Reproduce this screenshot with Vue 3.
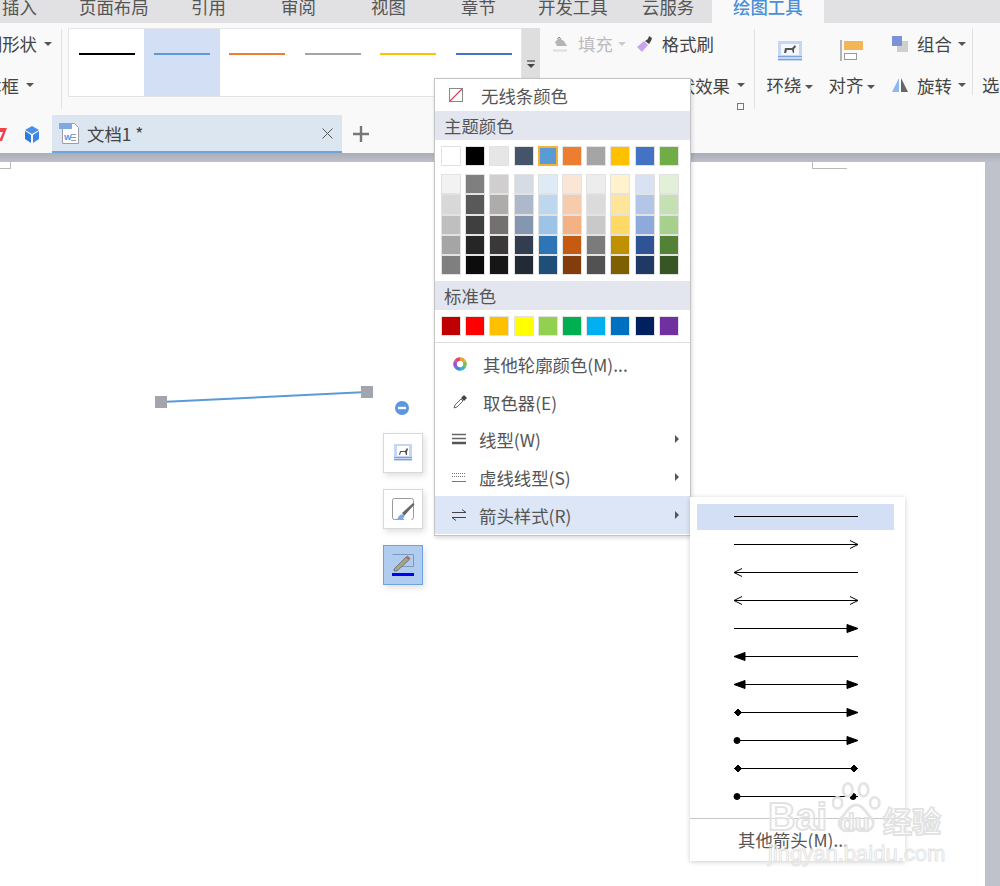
<template>
  <div class="app">
    <!-- 顶部选项卡 -->
    <div class="menu-bar">
      <span v-for="t in menuTabs" :key="t.name" class="menu-tab" :style="{ width: t.w + 'px' }">{{ t.name }}</span>
      <span class="menu-tab active">绘图工具</span>
    </div>

    <!-- 功能区 -->
    <div class="ribbon">
      <div class="rb-group shapes">
        <div class="rb-row first">绘制形状<i class="caret"></i></div>
        <div class="rb-row second">文本框<i class="caret"></i></div>
      </div>
      <div class="rb-sep"></div>
      <div class="gallery">
        <div v-for="(c, i) in lineColors" :key="c" class="gallery-item" :class="{ on: i === 1 }">
          <span class="gallery-line" :style="{ background: c }"></span>
        </div>
      </div>
      <div class="gallery-scroll">
        <svg width="10" height="10" viewBox="0 0 10 10"><path d="M1 1h8" stroke="#444" stroke-width="1.2" /><path d="M1 4h8L5 8z" fill="#444" /></svg>
      </div>
      <div class="rb-group fills">
        <div class="rb-row">
          <svg class="fill-icon" width="16" height="16" viewBox="0 0 16 16"><path d="M3 6l4-4 5 3 3 5H5z" fill="#b5b5b5" /><path d="M5 3l2-2 2 2" fill="none" stroke="#999" /><path d="M1 14.500h14" stroke="#ddd" stroke-width="2" /></svg>
          <span class="muted">填充</span><i class="caret light"></i>
          <svg class="brush-icon" width="16" height="16" viewBox="0 0 16 16"><path d="M0 11l7-6 4 4-6 7z" fill="#c7a4ee" /><path d="M8 5l3-2 1-3 3 2-1 3-2 3z" fill="#444" /></svg>
          <span>格式刷</span>
        </div>
        <div class="rb-row effect">状效果<i class="caret"></i></div>
        <i class="launcher"></i>
      </div>
      <div class="rb-sep second"></div>
      <div class="rb-big lead">
        <svg width="24" height="20" viewBox="0 0 24 20"><rect width="24" height="20" fill="#c5d7f2" /><path d="M0 15.500h24M0 18.500h24" stroke="#7ba3e0" /><rect x="3" y="3" width="18" height="11" fill="#f4f7fc" /><path d="M6 12l1-5h7l3-3 1 2-2 2v4h-1l-1-3H9l-1 3z" fill="#555" /></svg>
        <span>环绕<i class="caret"></i></span>
      </div>
      <div class="rb-big">
        <svg width="24" height="22" viewBox="0 0 24 22"><path d="M1 0v21" stroke="#999" stroke-width="1.4" /><rect x="4" y="1" width="19" height="9" fill="#f3b654" /><rect x="4.500" y="13.500" width="12" height="6" fill="#fff" stroke="#999" /></svg>
        <span>对齐<i class="caret"></i></span>
      </div>
      <div class="rb-stack">
        <div class="rb-row">
          <svg width="16" height="16" viewBox="0 0 16 16"><rect x="5" y="5" width="11" height="11" fill="#cfcfcf" /><rect width="10" height="10" fill="#7c92d8" /></svg>
          <span>组合</span><i class="caret"></i>
        </div>
        <div class="rb-row">
          <svg width="16" height="14" viewBox="0 0 16 14"><path d="M7 0v14H0z" fill="#8fb8ee" /><path d="M9 0v14h7z" fill="#666" /></svg>
          <span>旋转</span><i class="caret"></i>
        </div>
      </div>
      <div class="rb-sep third"></div>
      <div class="rb-clip">选</div>
    </div>

    <!-- 文档标签 -->
    <div class="tab-bar">
      <svg class="tb-seven" width="9" height="14" viewBox="0 0 9 14"><path d="M0 1h9L4 14H1L5 5H0z" fill="#f0434b" /></svg>
      <svg class="tb-cube" width="16" height="17" viewBox="0 0 16 17"><path d="M8 0l7 4-7 4-7-4z" fill="#4a8fe8" /><path d="M1 5l6 4v8l-6-4z" fill="#2f7be0" /><path d="M15 5L9 9v8l6-4z" fill="#3d86e6" /></svg>
      <div class="doc-tab">
        <svg width="21" height="22" viewBox="0 0 21 22">
          <path d="M3.500 1.500h12l4 4v16h-16z" fill="#fff" stroke="#9a9fa8" />
          <path d="M12 12.500h5M12 15.500h5M12 18.500h5" stroke="#8e9bb0" />
          <text x="5" y="18" font-size="8" font-weight="700" fill="#4a8fe8" font-family="Liberation Sans, sans-serif">W</text>
          <rect y="1" width="13" height="6" fill="#7ea9e2" />
        </svg>
        <span class="doc-name">文档1 *</span>
        <svg class="doc-close" width="11" height="11" viewBox="0 0 11 11"><path d="M.5.5l10 10M10.500.5l-10 10" stroke="#555" /></svg>
      </div>
      <svg class="tb-plus" width="18" height="18" viewBox="0 0 18 18"><path d="M9 1v16M1 9h16" stroke="#777" stroke-width="2.400" /></svg>
    </div>

    <!-- 文档区域 -->
    <div class="workspace">
      <div class="page">
        <i class="corner left"></i>
        <i class="corner right"></i>
      </div>
    </div>

    <!-- 画布上选中的线条 -->
    <svg class="shape-line" width="240" height="40" viewBox="0 0 240 40">
      <path d="M11 22L217 12" stroke="#5b9bd5" stroke-width="2" />
      <rect x="5" y="16" width="12" height="12" fill="#a3a5ae" />
      <rect x="211" y="6" width="12" height="12" fill="#a3a5ae" />
    </svg>

    <svg class="collapse" width="14" height="14" viewBox="0 0 14 14"><circle cx="7" cy="7" r="7" fill="#5b97e0" /><rect x="3" y="5.800" width="8" height="2.400" fill="#fff" /></svg>

    <div class="float-btn b1">
      <svg width="18" height="18" viewBox="0 0 18 18"><rect width="18" height="17" fill="#c5d7f2" /><path d="M0 13.500h18M0 15.500h18" stroke="#7ba3e0" /><rect x="3" y="2" width="12" height="10" fill="#fff" /><path d="M5 11l1-4h5l2-3 1 1-1 3v3h-1l-1-3H7l-1 3z" fill="#555" /></svg>
    </div>
    <div class="float-btn b2">
      <svg width="24" height="24" viewBox="0 0 24 24"><path d="M13 22.500H3.500a2 2 0 0 1-2-2v-17a2 2 0 0 1 2-2h17a2 2 0 0 1 2 2v17a2 2 0 0 1-2 2" fill="none" stroke="#999" /><path d="M11 16L22 6l1.500 1.500L13 19z" fill="#666" /><path d="M6 23c1-4 3-6 6-5.500l1.500 2-2.500 3.500z" fill="#7ba7ee" /></svg>
    </div>
    <div class="float-btn b3">
      <svg width="24" height="24" viewBox="0 0 24 24"><path d="M1.500 1.500h21v12H10" fill="none" stroke="#7c9ac0" /><path d="M3 16L15 4l3 3L6 18H3z" fill="#a3a38a" stroke="#555" stroke-width=".6" /><path d="M15 4l1.500-1.500 3 3L18 7z" fill="#b06a6a" /><rect x="1" y="20" width="22" height="3" fill="#0000ff" /></svg>
    </div>

    <!-- 线条颜色菜单 -->
    <div class="color-menu">
      <div class="menu-item none-item">
        <svg width="14" height="14" viewBox="0 0 14 14"><rect x=".5" y=".5" width="13" height="13" fill="#fff" stroke="#888" /><path d="M1 13L13 1" stroke="#e0415f" stroke-width="1.200" /></svg>
        <span>无线条颜色</span>
      </div>
      <div class="menu-head">主题颜色</div>
      <div class="swatch-row top">
        <span v-for="c in themeColors" :key="c" class="swatch" :class="{ picked: c === '#5b9bd5' }" :style="{ background: c }"></span>
      </div>
      <div class="shade-grid">
        <span v-for="(c, i) in shades" :key="i" class="swatch" :style="{ background: c }"></span>
      </div>
      <div class="menu-head">标准色</div>
      <div class="swatch-row">
        <span v-for="c in standardColors" :key="c" class="swatch" :style="{ background: c }"></span>
      </div>
      <div class="menu-line"></div>
      <div class="menu-item wide">
        <svg width="14" height="14" viewBox="0 0 14 14" fill="none" stroke-width="3.500">
          <path d="M7 2a5 5 0 0 1 4.300 2.500" stroke="#e9a13b" />
          <path d="M11.300 4.500a5 5 0 0 1 0 5" stroke="#7cc04b" />
          <path d="M11.300 9.500A5 5 0 0 1 7 12" stroke="#35b6c9" />
          <path d="M7 12a5 5 0 0 1-4.300-2.500" stroke="#4a7fe0" />
          <path d="M2.700 9.500a5 5 0 0 1 0-5" stroke="#a24bd0" />
          <path d="M2.700 4.500A5 5 0 0 1 7 2" stroke="#e0457a" />
        </svg>
        <span>其他轮廓颜色(M)...</span>
      </div>
      <div class="menu-item wide">
        <svg width="14" height="14" viewBox="0 0 14 14"><path d="M1 13l1-3 6-6 2 2-6 6z" fill="#fff" stroke="#666" /><path d="M8 3l3-3 3 3-3 3z" fill="#444" /></svg>
        <span>取色器(E)</span>
      </div>
      <div class="menu-item">
        <svg width="14" height="12" viewBox="0 0 14 12"><path d="M0 1.500h14M0 5.500h14" stroke="#666" stroke-width="1.500" /><path d="M0 10h14" stroke="#555" stroke-width="2.500" /></svg>
        <span>线型(W)</span><i class="sub-caret"></i>
      </div>
      <div class="menu-item">
        <svg width="14" height="12" viewBox="0 0 14 12"><path d="M0 2.500h14M0 5.500h14" stroke="#777" stroke-dasharray="1 1" /><path d="M0 10.500h14" stroke="#777" /></svg>
        <span>虚线线型(S)</span><i class="sub-caret"></i>
      </div>
      <div class="menu-item hover">
        <svg width="14" height="12" viewBox="0 0 14 12" fill="none" stroke="#444"><path d="M0 3.500h14M10 .5l4 3" /><path d="M0 8.500h14M4 11.500l-4-3" /></svg>
        <span>箭头样式(R)</span><i class="sub-caret"></i>
      </div>
    </div>

    <!-- 箭头样式子菜单 -->
    <div class="arrow-menu">
      <div class="arrow-list">
        <div v-for="(a, i) in arrows" :key="i" class="arrow-row" :class="{ on: i === 0 }">
          <svg width="126" height="13" viewBox="0 0 126 13">
            <path d="M1 6.500h124" stroke="#000" stroke-width="1.200" />
            <g transform="translate(0 .5)">
              <path v-if="a[0]" :d="heads[a[0]].left" :fill="heads[a[0]].fill" stroke="#000" />
              <path v-if="a[1]" :d="heads[a[1]].right" :fill="heads[a[1]].fill" stroke="#000" />
            </g>
          </svg>
        </div>
      </div>
      <div class="arrow-more">其他箭头(M)...</div>
    </div>

    <!-- 水印 -->
    <div class="watermark">
      <svg class="paw" width="52" height="57" viewBox="0 0 56 56" fill="none" stroke="#e4e4e4" stroke-width="3">
        <ellipse cx="17" cy="8" rx="5" ry="7" />
        <ellipse cx="34" cy="8" rx="5" ry="7" />
        <ellipse cx="6" cy="22" rx="5" ry="6" />
        <ellipse cx="46" cy="22" rx="5" ry="6" />
        <path d="M26 24c-7 0-10 8-16 14-6 7 0 15 8 14 4 0 6-2 8-2s4 2 8 2c8 1 14-7 8-14-6-6-9-14-16-14z" />
      </svg>
      <span class="wm wm-bai">Bai</span>
      <span class="wm wm-du">du</span>
      <span class="wm wm-jy">经验</span>
      <span class="wm wm-url">jingyan.baidu.com</span>
    </div>
  </div>
</template>

<script setup>
const menuTabs = [
  { name: "插入", w: 77 },
  { name: "页面布局", w: 112 },
  { name: "引用", w: 90 },
  { name: "审阅", w: 90 },
  { name: "视图", w: 90 },
  { name: "章节", w: 77 },
  { name: "开发工具", w: 104 },
  { name: "云服务", w: 72 }
];

const lineColors = ["#000000", "#5b9bd5", "#ed7d31", "#a5a5a5", "#ffc000", "#4472c4"];

const themeColors = ["#ffffff", "#000000", "#e7e6e6", "#44546a", "#5b9bd5", "#ed7d31", "#a5a5a5", "#ffc000", "#4472c4", "#70ad47"];

// 按行排列的主题色深浅
const shades = [
  "#f2f2f2", "#7f7f7f", "#d0cece", "#d6dce4", "#deeaf6", "#fbe5d5", "#ededed", "#fff2cc", "#d9e2f3", "#e2efd9",
  "#d8d8d8", "#595959", "#aeabab", "#adb9ca", "#bdd7ee", "#f7cbac", "#dbdbdb", "#fee599", "#b4c6e7", "#c5e0b3",
  "#bfbfbf", "#3f3f3f", "#757070", "#8496b0", "#9dc3e6", "#f4b183", "#c9c9c9", "#ffd965", "#8eaadb", "#a8d08d",
  "#a5a5a5", "#262626", "#3a3838", "#323e4f", "#2e75b5", "#c55a11", "#7b7b7b", "#bf9000", "#2f5496", "#538135",
  "#7f7f7f", "#0c0c0c", "#171616", "#222a35", "#1f4e79", "#833c0b", "#525252", "#7f6000", "#1f3864", "#375623"
];

const standardColors = ["#c00000", "#ff0000", "#ffc000", "#ffff00", "#92d050", "#00b050", "#00b0f0", "#0070c0", "#002060", "#7030a0"];

const heads = {
  open: { left: "M9 2L1 6l8 4", right: "M117 2l8 4-8 4", fill: "none" },
  solid: { left: "M1 6l11-4v8z", right: "M125 6l-11-4v8z", fill: "#000" },
  diamond: { left: "M5 2.500l3.500 3.500-3.500 3.500L1.500 6z", right: "M121 2.500l3.500 3.500-3.500 3.500-3.500-3.500z", fill: "#000" },
  dot: { left: "M4 3a3 3 0 1 1 0 6 3 3 0 0 1 0-6z", right: "M120 3a3 3 0 1 1 0 6 3 3 0 0 1 0-6z", fill: "#000" }
};

const arrows = [
  [null, null],
  [null, "open"],
  ["open", null],
  ["open", "open"],
  [null, "solid"],
  ["solid", null],
  ["solid", "solid"],
  ["diamond", "solid"],
  ["dot", "solid"],
  ["diamond", "diamond"],
  ["dot", "dot"]
];
</script>

<style>
html,
body {
  margin: 0;
  background: #fff;
}
</style>

<style scoped>
.app {
  position: relative;
  width: 1000px;
  height: 886px;
  overflow: hidden;
  font-family: "Noto Sans CJK SC", "Liberation Sans", sans-serif;
  font-size: 17.400px;
  color: #444;
  background: #fff;
}

.menu-bar {
  display: flex;
  height: 23px;
  overflow: hidden;
  line-height: 17px;
  background: #e1e1e3;
}

.menu-tab {
  flex: none;
  padding-left: 2px;
  margin-top: -2px;
  color: #555;
  box-sizing: border-box;
}

.menu-tab.active {
  width: 112px;
  padding-left: 21px;
  margin-top: 0;
  font-weight: 500;
  line-height: 13px;
  color: #4a8fd8;
  background: #f9f9f9;
}

.ribbon {
  display: flex;
  height: 92px;
  background: #f9f9f9;
}

.rb-group.shapes {
  flex: none;
  width: 61px;
  box-sizing: border-box;
}

.rb-row {
  display: flex;
  align-items: center;
  height: 41.500px;
  white-space: nowrap;
}

.shapes .rb-row {
  justify-content: flex-end;
}

.shapes .first {
  padding-right: 9px;
}

.shapes .second {
  padding-right: 27px;
}

.caret {
  display: inline-block;
  flex: none;
  width: 0;
  height: 0;
  margin-left: 7px;
  vertical-align: middle;
  border-top: 4px solid #555;
  border-right: 4px solid transparent;
  border-left: 4px solid transparent;
}

.caret.light {
  margin-left: 5px;
  border-top-color: #ccc;
}

.rb-sep {
  flex: none;
  width: 1px;
  height: 80px;
  margin-top: 6px;
  background: #e2e2e2;
}

.gallery {
  display: flex;
  flex: none;
  width: 454px;
  height: 69px;
  margin-top: 5px;
  margin-left: 6px;
  overflow: hidden;
  background: #fff;
  border: 1px solid #e4e4e4;
  box-sizing: border-box;
}

.gallery-item {
  display: flex;
  flex: none;
  justify-content: center;
  width: 75.400px;
  height: 100%;
  padding-top: 24px;
  box-sizing: border-box;
}

.gallery-item.on {
  background: #d3dff5;
}

.gallery-line {
  width: 56px;
  height: 2px;
}

.gallery-scroll {
  display: flex;
  flex: none;
  align-items: flex-end;
  justify-content: center;
  width: 18px;
  height: 69px;
  padding-bottom: 27px;
  margin-top: 5px;
  background: #dedede;
  box-sizing: border-box;
}

.rb-group.fills {
  position: relative;
  flex: none;
  width: 214px;
  padding-left: 12px;
  box-sizing: border-box;
}

.fill-icon {
  margin-right: 10px;
}

.muted {
  color: #bbb;
}

.brush-icon {
  margin-right: 9px;
  margin-left: 11px;
}

.rb-row.effect {
  justify-content: flex-end;
  padding-right: 9px;
}

.launcher {
  position: absolute;
  top: 80px;
  right: 10px;
  width: 5px;
  height: 5px;
  border: 1px solid #777;
}

.rb-big {
  display: flex;
  flex: none;
  flex-direction: column;
  align-items: center;
  width: 62px;
  padding-top: 17px;
  box-sizing: border-box;
}

.rb-big.lead {
  margin-left: 4px;
}

.rb-big svg {
  height: 22px;
}

.rb-big span {
  margin-top: 10px;
  white-space: nowrap;
}

.rb-big .caret {
  margin-left: 4px;
}

.rb-stack {
  flex: none;
  width: 89px;
  padding-left: 9px;
  box-sizing: border-box;
}

.rb-stack svg {
  flex: none;
}

.rb-stack span {
  margin-left: 9px;
}

.rb-stack .caret {
  margin-left: 6px;
}

.rb-sep.third {
  height: 67px;
  margin-top: 5px;
}

.rb-clip {
  padding-top: 42px;
  padding-left: 9px;
  line-height: 40px;
  white-space: nowrap;
}

.tab-bar {
  position: relative;
  display: flex;
  align-items: center;
  height: 38px;
  background: #f9f9f9;
}

.tb-seven {
  margin-left: -2px;
}

.tb-cube {
  margin-left: 17px;
}

.doc-tab {
  display: flex;
  align-items: center;
  width: 290px;
  height: 38px;
  padding: 0 9px 0 7px;
  margin-left: 12px;
  background: #dce6f1;
  border-bottom: 2px solid #6fa3de;
  box-sizing: border-box;
}

.doc-name {
  flex: 1;
  padding-top: 1px;
  margin-left: 7px;
}

.tb-plus {
  margin-left: 10px;
}

.workspace {
  height: 733px;
  padding-top: 9px;
  background: #c0c2cb linear-gradient(#acaeb7, #c0c2cb 10px);
  box-sizing: border-box;
}

.page {
  position: relative;
  width: 985px;
  height: 100%;
  background: #fff;
}

.corner {
  position: absolute;
  top: 0;
  height: 6px;
  border-bottom: 1px solid #bbb;
}

.corner.left {
  left: 0;
  width: 10px;
  border-right: 1px solid #bbb;
}

.corner.right {
  left: 812px;
  width: 34px;
  border-left: 1px solid #bbb;
}

.shape-line {
  position: absolute;
  top: 380px;
  left: 150px;
}

.collapse {
  position: absolute;
  top: 401px;
  left: 395px;
}

.float-btn {
  position: absolute;
  left: 383px;
  display: flex;
  align-items: center;
  justify-content: center;
  width: 40px;
  height: 40px;
  background: #fff;
  border: 1px solid #d8d8d8;
  box-sizing: border-box;
  box-shadow: 2px 3px 6px rgb(0 0 0 / 12%);
}

.float-btn.b1 {
  top: 433px;
}

.float-btn.b2 {
  top: 489px;
}

.float-btn.b3 {
  top: 545px;
  background: #b0ccee;
  border-color: #6fa3de;
}

.color-menu {
  position: absolute;
  top: 78px;
  left: 434px;
  width: 257px;
  height: 458px;
  background: #fff;
  border: 1px solid #c4c4c4;
  box-sizing: border-box;
  box-shadow: 1px 2px 4px rgb(0 0 0 / 15%);
}

.menu-item {
  display: flex;
  align-items: center;
  height: 38px;
  padding-left: 16px;
  color: #555;
  white-space: nowrap;
  box-sizing: border-box;
}

.menu-item svg {
  flex: none;
  width: 16px;
  margin-right: 12px;
}

.menu-item.none-item {
  height: 32px;
  padding-left: 14px;
}

.menu-item.none-item svg {
  width: 14px;
  margin-right: 18px;
}

.menu-item.wide {
  padding-top: 2px;
  padding-left: 17px;
}

.menu-item.wide svg {
  margin-right: 15px;
}

.menu-item.hover {
  background: #dce6f6;
}

.sub-caret {
  width: 0;
  height: 0;
  margin-right: 11px;
  margin-left: auto;
  border-top: 4px solid transparent;
  border-bottom: 4px solid transparent;
  border-left: 4px solid #555;
}

.menu-head {
  height: 29px;
  padding-left: 9px;
  line-height: 29px;
  color: #555;
  background: #e3e6ef;
}

.swatch-row,
.shade-grid {
  display: grid;
  grid-template-columns: repeat(10, 20px);
  column-gap: 4.200px;
  padding-left: 6px;
}

.swatch-row {
  grid-auto-rows: 20px;
  padding-top: 6px;
  padding-bottom: 6px;
}

.swatch-row.top {
  padding-bottom: 8px;
}

.shade-grid {
  grid-auto-rows: 20.300px;
  padding-bottom: 6px;
}

.swatch {
  display: block;
  border: 1px solid #e2e2e2;
  box-sizing: border-box;
}

.swatch.picked {
  border: 2px solid #f5b335;
}

.menu-line {
  height: 1px;
  margin-bottom: 1px;
  background: #dcdcdc;
}

.arrow-menu {
  position: absolute;
  top: 497px;
  left: 690px;
  width: 215px;
  height: 364px;
  background: #fff;
  box-shadow: 0 1px 5px rgb(0 0 0 / 20%);
}

.arrow-list {
  height: 322px;
  padding-top: 7px;
  padding-left: 7px;
  border-bottom: 1px solid #c8c8c8;
  box-sizing: border-box;
}

.arrow-row {
  display: flex;
  align-items: center;
  justify-content: center;
  width: 197px;
  height: 28px;
  box-sizing: border-box;
}

.arrow-row:first-child {
  height: 26px;
  padding-bottom: 2px;
}

.arrow-row.on {
  background: #d3dff5;
}

.arrow-more {
  padding-left: 48px;
  line-height: 42px;
  color: #555;
  white-space: nowrap;
}

.watermark {
  position: absolute;
  top: 780px;
  left: 768px;
  width: 180px;
  height: 90px;
  pointer-events: none;
}

.paw {
  position: absolute;
  top: 0;
  left: 64px;
}

.wm {
  position: absolute;
  font-weight: 700;
  color: rgb(255 255 255 / 40%);
  white-space: nowrap;
  -webkit-text-stroke: 1.800px #e2e2e2;
}

.wm-bai {
  top: 16px;
  left: 0;
  font-family: "Liberation Sans", sans-serif;
  font-size: 38px;
}

.wm-du {
  top: 29px;
  left: 72px;
  font-family: "Liberation Sans", sans-serif;
  font-size: 24px;
}

.wm-jy {
  top: 19px;
  left: 115px;
  font-size: 29px;
}

.wm-url {
  top: 61px;
  left: 0;
  font-family: "Liberation Sans", sans-serif;
  font-size: 22px;
  font-weight: 400;
  -webkit-text-stroke: 1px #e4e4e4;
}
</style>
